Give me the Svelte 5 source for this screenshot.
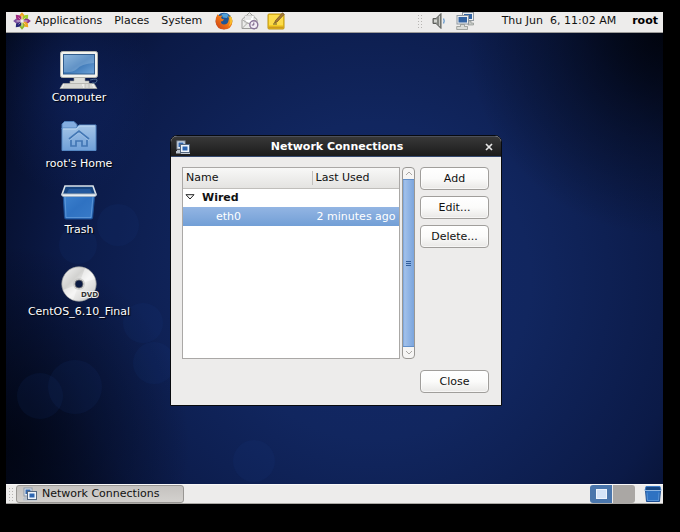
<script>
  const desktopItems = [
    { name: 'Computer', icon: 'computer', top: 17 },
    { name: "root's Home", icon: 'home', top: 83 },
    { name: 'Trash', icon: 'trash', top: 149 },
    { name: 'CentOS_6.10_Final', icon: 'dvd', top: 231 }
  ];
  const bubbles = [
    { x: 112, y: 192, r: 21 },
    { x: 72, y: 212, r: 19 },
    { x: 137, y: 290, r: 20 },
    { x: 148, y: 330, r: 21 },
    { x: 69, y: 354, r: 27 },
    { x: 34, y: 363, r: 23 },
    { x: 248, y: 428, r: 21 }
  ];
  const petals = [
    { angle: 0, color: '#f0a31c' },
    { angle: 45, color: '#9ccd2a' },
    { angle: 90, color: '#8f358b' },
    { angle: 135, color: '#efa724' },
    { angle: 180, color: '#8bb82b' },
    { angle: 225, color: '#262577' },
    { angle: 270, color: '#7a4fa0' },
    { angle: 315, color: '#a12d82' }
  ];
</script>

{#snippet connectionIcon()}
  <svg class="small" viewBox="0 0 14 14" aria-hidden="true">
    <rect x="1" y="1" width="8" height="8" fill="#dfe8f2" stroke="#8b98a8" />
    <rect x="2.5" y="2.5" width="5" height="4.500" fill="#3568ad" />
    <path d="M1 10h4v1H1zM0 11h5v2.500H0z" fill="#b9c2cc" />
    <rect x="4.500" y="4.500" width="9" height="8" fill="#eef4fa" stroke="#53667e" />
    <rect x="6.500" y="6.500" width="5" height="4" fill="#2c65b1" />
    <path d="M5 13.5h9" stroke="#c5ccd4" />
  </svg>
{/snippet}

{#snippet trashIcon()}
  <svg viewBox="0 0 40 40" aria-hidden="true">
    <defs>
      <linearGradient id="bin" x2="1" y2="1"><stop stop-color="#3f84d0" /><stop offset=".5" stop-color="#2f72c2" /><stop offset="1" stop-color="#397bc8" /></linearGradient>
    </defs>
    <path d="M4 10L5.500 35.500Q5.600 37 7 37H32Q33.500 37 33.600 35.500L36 10Z" fill="url(#bin)" stroke="#1c4d91" />
    <path d="M6 14L7 35.500H32L34 14" fill="none" stroke="#78ace4" stroke-width=".8" opacity=".7" />
    <path d="M6 4H34L37 12.500H3Z" fill="#174580" stroke="#dbe2e8" stroke-width="1.600" />
    <path d="M8 11L10 7H31L33 11Z" fill="#24599e" />
    <path d="M2.500 12Q2.500 14.500 4.500 14.500H35.500Q37.500 14.500 37.500 12Z" fill="#e8edf1" stroke="#9eafc0" stroke-width=".7" />
  </svg>
{/snippet}

<main class="screen">
  <header class="panel top">
    <nav class="menus">
      <button class="menu">
        <svg class="logo" viewBox="0 0 18 18" aria-hidden="true">
          {#each petals as petal}
            <path d="M9 7.800L6.700 5.800V3L9 .2L11.300 3V5.800Z" fill={petal.color} transform="rotate({petal.angle} 9 9)" />
          {/each}
          <path d="M9 3.500v11M3.500 9h11" stroke="#f4f0ee" stroke-width=".8" />
          <path d="M5.500 5.500l7 7M12.500 5.500l-7 7" stroke="#f4f0ee" stroke-width=".5" />
        </svg>
        Applications
      </button>
      <button class="menu">Places</button>
      <button class="menu">System</button>
    </nav>
    <div class="launchers">
      <button class="icon" aria-label="Firefox">
        <svg viewBox="0 0 18 18" aria-hidden="true">
          <defs>
            <linearGradient id="fox" x1="1" y1="0" x2="0" y2="1"><stop stop-color="#f9c626" /><stop offset=".5" stop-color="#ee7216" /><stop offset="1" stop-color="#c73b16" /></linearGradient>
          </defs>
          <circle cx="9" cy="9" r="8.300" fill="#1f5596" />
          <path d="M6.500 2.500Q10 .5 13.500 3L12 6L8 5.500Z" fill="#4f9fd8" />
          <path d="M2.500 2.300L4.500 4Q6 3.200 7.600 3.600L6 5.600L7 7L9.200 7.500L7.500 9.200L5.900 9.500Q6 12.300 9 12.600Q12.500 12.500 13.300 9.500L14 6.500L13 4Q17.700 5.500 17.400 10Q16.600 17.500 9 17.600Q1.600 17.400.5 10Q.3 6 2.500 2.300Z" fill="url(#fox)" />
          <path d="M14.500 3Q17.500 5.500 17.300 9Q16.500 13 13.500 14.500Q15.800 11.500 15.300 7Z" fill="#fbc02e" />
        </svg>
      </button>
      <button class="icon" aria-label="Mail and calendar">
        <svg viewBox="0 0 18 18" aria-hidden="true">
          <path d="M1 7.500L8.500 .7L16 7.500V16.500H1Z" fill="#ededeb" stroke="#9b9b98" />
          <path d="M4 3.500H13V11H4Z" fill="#fff" stroke="#b7b7b3" stroke-width=".6" />
          <path d="M5 5h6M5 7h5" stroke="#b9b9b9" stroke-width=".7" />
          <path d="M1.500 8L8.500 12L15.500 8M1.500 16L6.500 11" fill="none" stroke="#a8a8a5" />
          <circle cx="12.800" cy="12.800" r="4" fill="#f2edf5" stroke="#887397" stroke-width="1.400" />
          <path d="M12.800 10.500V13H10.800" fill="none" stroke="#70597e" />
        </svg>
      </button>
      <button class="icon" aria-label="Notes">
        <svg viewBox="0 0 18 18" aria-hidden="true">
          <rect x="1" y="2" width="16" height="15" rx="1" fill="#f4cd25" stroke="#bd9412" />
          <path d="M2 3H16V13H2Z" fill="#ffe15a" opacity=".7" /><path d="M1.500 15.500h15" stroke="#cf9a1c" stroke-width="2" />
          <path d="M8.500 8.500L15.500 .8L17.300 2.300L10 10L7.500 11Z" fill="#a77937" stroke="#5c4320" stroke-width=".6" />
          <path d="M6 12h4" stroke="#655622" />
        </svg>
      </button>
    </div>
    <div class="tray">
      <span class="grip"></span>
      <button class="icon" aria-label="Volume">
        <svg viewBox="0 0 18 18" aria-hidden="true">
          <path d="M3 6.500H6L11 1.500V16.500L6 11.500H3Z" fill="#858782" stroke="#5c5e5b" />
          <path d="M4 7.500H7V10.500H4Z" fill="#d3d4d0" /><path d="M9.500 4V14" stroke="#c8c9c6" />
          <path d="M13.500 6.500Q15 9 13.500 11.500" fill="none" stroke="#6a9bce" stroke-width="1.400" />
        </svg>
      </button>
      <button class="icon" aria-label="Network">
        <svg viewBox="0 0 18 18" aria-hidden="true">
          <rect x="6.500" y=".5" width="11" height="8" fill="#edf0f1" stroke="#8f979f" /><rect x="8" y="2" width="8" height="5" fill="#3465a4" />
          <path d="M12 9h3v2h2.500v2H12z" fill="#c8cbc8" stroke="#858985" stroke-width=".6" />
          <rect x="1" y="3.500" width="11.500" height="8.500" fill="#eef1f2" stroke="#8f979f" /><rect x="2.500" y="5" width="8.500" height="5.500" fill="#3465a4" />
          <path d="M4.500 12.500h4v2h3v3H.7v-3h3.800z" fill="#dadcd8" stroke="#858985" stroke-width=".7" />
        </svg>
      </button>
      <time>Thu Jun  6, 11:02 AM</time>
      <button class="user">root</button>
    </div>
  </header>

  <section class="desktop" aria-label="Desktop">
    {#each bubbles as b}
      <i class="bubble" style="left:{b.x - b.r}px;top:{b.y - b.r}px;width:{b.r * 2}px;height:{b.r * 2}px"></i>
    {/each}

    {#each desktopItems as item}
      <button class="shortcut" style="top:{item.top}px">
        {#if item.icon === 'computer'}
          <svg viewBox="0 0 40 40" aria-hidden="true">
            <defs><linearGradient id="lcd" x2="1" y2="1"><stop stop-color="#7aa8d5" /><stop offset=".5" stop-color="#3b76b5" /><stop offset="1" stop-color="#6fa4da" /></linearGradient></defs>
            <path d="M15 27H26V31H30V34H11V31H15Z" fill="#dddeda" stroke="#9d9e98" stroke-width=".6" />
            <rect x="1.500" y="1.500" width="37" height="26" rx="2" fill="#f3f3ef" stroke="#b2b3ad" />
            <rect x="4.500" y="4.500" width="31" height="19.500" fill="url(#lcd)" stroke="#315c8c" />
            <path d="M5 5H35V13Q22 14 18 19Q13 23 5 22Z" fill="#b9d5ec" opacity=".32" />
            <path d="M4 33.500H35L38 38.500H1Z" fill="#ecece8" stroke="#aaaaa4" stroke-width=".7" />
            <path d="M5 35h18M4 37h20M26 35h7M26 37h8M26 33v5M30 33v5" stroke="#bbbbb5" stroke-width=".8" />
            <path d="M31 30Q39 28 38 31T33 33" fill="none" stroke="#58789d" stroke-width=".8" />
          </svg>
        {:else if item.icon === 'home'}
          <svg viewBox="0 0 40 40" aria-hidden="true">
            <defs><linearGradient id="folder" x2="0" y2="1"><stop stop-color="#a4c4e7" /><stop offset="1" stop-color="#70a0d8" /></linearGradient></defs>
            <path d="M3 13V8L5.500 5.500H15L18 8.500V13Z" fill="#84ade0" stroke="#4f7eb9" />
            <path d="M3 12H17L20 9H37V34.500H3Z" fill="url(#folder)" stroke="#5688c3" />
            <path d="M4 13H17.500L20.500 10H36" fill="none" stroke="#c0d9f2" />
            <path d="M10 23L20 15L30 23M12 24V30H17V25H23V30H28V24" fill="none" stroke="#4377b5" stroke-width="1.700" />
            <path d="M10 24.500L20 16.500L30 24.500" fill="none" stroke="#a7c8e9" stroke-width=".6" />
          </svg>
        {:else if item.icon === 'trash'}
          {@render trashIcon()}
        {:else}
          <svg viewBox="0 0 40 40" aria-hidden="true">
            <defs><linearGradient id="disc" x2="1" y2="1"><stop stop-color="#f6f6f5" /><stop offset=".35" stop-color="#d2d2d0" /><stop offset=".55" stop-color="#f0f0ef" /><stop offset="1" stop-color="#c4c4c3" /></linearGradient></defs>
            <circle cx="20" cy="20" r="17.200" fill="url(#disc)" stroke="#9c9d9c" stroke-width=".7" />
            <path d="M20 20L26 4Q34 8 36 15Z" fill="#fff" opacity=".45" /><path d="M20 20L4 26Q7 33 14 36Z" fill="#fff" opacity=".4" />
            <circle cx="20" cy="20" r="6" fill="#c4c4c3" opacity=".7" /><circle cx="20" cy="20" r="4" fill="#0b1a42" stroke="#777" stroke-width=".7" />
            <text x="22" y="33">DVD</text>
          </svg>
        {/if}
        <span>{item.name}</span>
      </button>
    {/each}

    <section class="window" aria-labelledby="window-title">
      <header class="titlebar">
        {@render connectionIcon()}
        <h1 id="window-title">Network Connections</h1>
        <button class="close" aria-label="Close window">
          <svg viewBox="0 0 8 8" aria-hidden="true"><path d="M1 1L7 7M7 1L1 7" stroke="#e4e4e4" stroke-width="1.700" /></svg>
        </button>
      </header>
      <div class="content">
        <div class="connections">
          <div class="list">
            <table>
              <thead><tr><th>Name</th><th>Last Used</th></tr></thead>
              <tbody>
                <tr class="group">
                  <td colspan="2">
                    <svg viewBox="0 0 10 6" aria-hidden="true"><path d="M1 .7H9L5 5Z" fill="#fff" stroke="#222" /></svg>Wired
                  </td>
                </tr>
                <tr class="selected"><td>eth0</td><td>2 minutes ago</td></tr>
              </tbody>
            </table>
          </div>
          <div class="scrollbar">
            <button aria-label="Scroll up"><svg viewBox="0 0 8 5" aria-hidden="true"><path d="M1 4L4 1L7 4" /></svg></button>
            <div class="thumb"><i></i><i></i><i></i></div>
            <button aria-label="Scroll down"><svg viewBox="0 0 8 5" aria-hidden="true"><path d="M1 1L4 4L7 1" /></svg></button>
          </div>
          <div class="actions">
            <button class="push">Add</button>
            <button class="push">Edit...</button>
            <button class="push">Delete...</button>
          </div>
        </div>
        <footer><button class="push">Close</button></footer>
      </div>
    </section>
  </section>

  <footer class="panel bottom">
    <span class="grip"></span>
    <button class="task">{@render connectionIcon()}Network Connections</button>
    <div class="workspaces">
      <button class="active" aria-label="Workspace 1"><i></i></button>
      <button aria-label="Workspace 2"></button>
    </div>
    <button class="icon" aria-label="Trash">
      <svg viewBox="0 0 18 18" aria-hidden="true">
        <path d="M1.500 5L2.500 16.500H15.500L16.500 5Z" fill="#2f72c2" stroke="#1c4d91" />
        <path d="M3 7.500L3.500 15.500H14.500L15 7.500" fill="none" stroke="#5f9adb" stroke-width=".8" />
        <path d="M2 1.500H16L17 5.500H1Z" fill="#174580" stroke="#3d7cc6" />
        <path d="M1 5.500H17" stroke="#8db5e2" />
      </svg>
    </button>
  </footer>
</main>

<style>
  :global(body) { background: #000; }
  .screen, .screen * { box-sizing: border-box; }
  .screen {
    display: flex;
    flex-direction: column;
    min-height: 100vh;
    padding: 12px 17px 28px 6px;
    background: #000;
    color: #111;
    font: 11px/14px "DejaVu Sans", sans-serif;
  }
  button {
    margin: 0;
    padding: 0;
    border: 0;
    background: none;
    color: inherit;
    font: inherit;
    white-space: nowrap;
  }
  svg { display: block; flex: none; }
  .small { width: 14px; height: 14px; }

  .panel { display: flex; align-items: center; height: 21px; background: #edeceb; }
  .top { border-bottom: 1px solid #9c9b99; padding: 0 5px 2px 7px; }
  .menus { display: flex; gap: 12px; }
  .menu { display: flex; align-items: center; gap: 4px; }
  .logo { width: 18px; height: 18px; }
  .launchers { display: flex; gap: 8px; margin-left: 13px; }
  .icon { width: 18px; height: 18px; }
  .icon svg { width: 18px; height: 18px; }
  .tray { display: flex; align-items: center; gap: 8px; margin-left: auto; }
  .grip {
    width: 5px;
    height: 14px;
    background: radial-gradient(circle, #b7b5b2 1px, transparent 1px) 0 0 / 3px 3px;
  }
  time { margin-left: 20px; white-space: pre; }
  .user { margin-left: 8px; color: #000; font-weight: bold; }

  .desktop {
    position: relative;
    flex: 1;
    min-height: 420px;
    overflow: hidden;
    background:
      radial-gradient(ellipse 30% 45% at 100% 0%, rgba(0, 2, 8, .85), rgba(0, 2, 8, .35) 55%, transparent),
      radial-gradient(ellipse 28% 45% at 0% 92%, rgba(0, 3, 12, .75), rgba(0, 3, 12, .3) 60%, transparent),
      radial-gradient(ellipse 80px 110px at 10% 12%, rgba(18, 43, 115, .45), transparent),
      radial-gradient(ellipse 68% 100% at 56% 55%, #12286a 0%, #11265f 35%, #0b1a47 70%, #050d28 92%, #030a1e 100%);
  }
  .bubble { position: absolute; border-radius: 50%; background: rgba(30, 65, 150, .1); }

  .shortcut {
    position: absolute;
    left: 0;
    display: flex;
    flex-direction: column;
    align-items: center;
    gap: 1px;
    width: 146px;
    color: #fff;
    text-shadow: 1px 1px 1px #000;
  }
  .shortcut svg { width: 40px; height: 40px; }
  .shortcut text {
    font: bold 7px "DejaVu Sans", sans-serif;
    fill: #333;
    stroke: #eee;
    stroke-width: 2px;
    paint-order: stroke;
    text-shadow: none;
  }

  .window {
    position: absolute;
    left: 164px;
    top: 102px;
    width: 332px;
    border: 1px solid #080a0e;
    border-radius: 7px 7px 0 0;
    background: #edeceb;
    overflow: hidden;
  }
  .titlebar {
    display: flex;
    align-items: center;
    height: 21px;
    padding: 0 7px 0 5px;
    border-top: 1px solid #4c505a;
    border-bottom: 1px solid #35496f;
    background: linear-gradient(#383838, #1b1b1b);
    color: #fff;
  }
  h1 { flex: 1; margin: 0; font-size: 11px; line-height: 14px; text-align: center; }
  .close { width: 10px; height: 14px; }
  .close svg { width: 8px; height: 8px; margin: 0 auto; }
  .content { padding: 10px 12px 12px 11px; }
  .connections { display: flex; height: 192px; }
  .list { flex: 1; border: 1px solid #aaa8a6; background: #fff; }
  table { width: 100%; border-collapse: collapse; table-layout: fixed; }
  th {
    height: 20px;
    padding: 0 3px;
    border-bottom: 1px solid #c0bebb;
    background: linear-gradient(#f8f8f7, #e4e3e1);
    font-weight: normal;
    text-align: left;
  }
  th:first-child { width: 60%; background: linear-gradient(#c3c1be, #c3c1be) right center / 1px 14px no-repeat, linear-gradient(#f8f8f7, #e4e3e1); }
  td { height: 19px; padding: 0 3px 0 4px; white-space: nowrap; }
  .group td { padding: 0 2px; font-weight: bold; }
  .group svg { display: inline-block; width: 10px; height: 6px; margin-right: 7px; vertical-align: 1px; }
  .selected { background: linear-gradient(#93b5e3, #729fd6); color: #fff; }
  .selected td:first-child { padding-left: 33px; }

  .scrollbar {
    display: flex;
    flex-direction: column;
    width: 13px;
    margin: 0 5px 0 2px;
    border: 1px solid #999794;
    border-radius: 4px;
    background: #f6f5f4;
    overflow: hidden;
  }
  .scrollbar button { display: flex; align-items: center; justify-content: center; height: 11px; }
  .scrollbar svg { width: 8px; height: 5px; fill: none; stroke: #aaa8a5; }
  .thumb {
    display: flex;
    flex: 1;
    flex-direction: column;
    align-items: center;
    justify-content: center;
    gap: 1px;
    border: 1px solid #628fc9;
    border-width: 1px 0;
    background: linear-gradient(90deg, #739ed7, #a1c0ea 15%, #7ba5dd);
  }
  .thumb i { width: 5px; height: 1px; background: #315e9b; }

  .actions { display: flex; flex-direction: column; gap: 6px; }
  .push {
    width: 69px;
    height: 23px;
    border: 1px solid #a09e9b;
    border-radius: 4px;
    background: linear-gradient(#fff, #fbfbfa 50%, #e9e8e6);
    box-shadow: inset 0 0 0 1px rgba(255, 255, 255, .6);
  }
  .content footer { display: flex; justify-content: flex-end; padding-top: 11px; }

  .bottom { height: 20px; padding: 0 1px 0 2px; border-top: 1px solid #faf9f9; border-bottom: 1px solid #aaa8a5; }
  .task {
    display: flex;
    align-items: center;
    gap: 5px;
    width: 168px;
    height: 18px;
    margin-left: 3px;
    padding: 0 6px;
    border: 1px solid #989693;
    border-radius: 3px;
    background: linear-gradient(#c5c2bf, #d3d1ce);
  }
  .workspaces { display: flex; gap: 1px; margin: 0 9px 0 auto; border-radius: 3px; overflow: hidden; }
  .workspaces button { display: flex; align-items: center; justify-content: center; width: 22px; height: 18px; background: #aaa7a4; }
  .workspaces .active { background: #4a76ac; }
  .workspaces i { width: 11px; height: 10px; border: 1px solid #eef4fc; background: #d5e4f8; }
</style>
